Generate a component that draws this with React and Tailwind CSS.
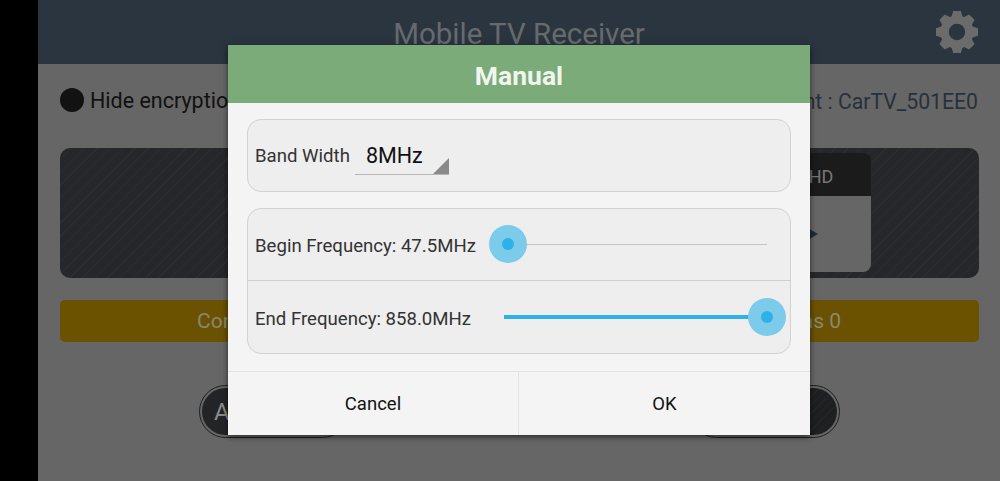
export default function App() {
  const teeth = [0, 45, 90, 135, 180, 225, 270, 315];
  return (
    <div className="relative flex h-[481px] w-[1000px] overflow-hidden bg-black font-['Roboto',sans-serif]">
      <div className="w-[38px] shrink-0 bg-black" />
      <div className="flex min-w-0 flex-1 flex-col bg-[#666666]">
        <header className="relative flex h-[64px] shrink-0 items-center justify-center bg-[#2a3540] pt-[3px]">
          <h1 className="text-[29.5px] leading-[34px] font-normal text-[#676a6d]">Mobile TV Receiver</h1>
          <svg className="absolute top-[10px] right-[21px] h-[44px] w-[44px]" viewBox="-22 -22 44 44" fill="#6b6b6b">
            <circle r="12.4" fill="none" stroke="#6b6b6b" strokeWidth="8.4" />
            {teeth.map((a) => (
              <polygon key={a} points="-6,-14 -3.8,-21 3.8,-21 6,-14" transform={`rotate(${a})`} />
            ))}
          </svg>
        </header>

        <div className="mt-[24px] flex h-[24px] items-center justify-between pr-[22px] pl-[22px]">
          <div className="flex items-center gap-[6px]">
            <span className="h-[24px] w-[24px] rounded-full bg-[#121212]" />
            <span className="pt-[3px] text-[21.5px] text-[#111111]">Hide encryption</span>
          </div>
          <span className="pt-[3px] text-[21.2px] text-[#27313b]">Current : CarTV_501EE0</span>
        </div>

        <div className="mt-[36px] mr-[21px] ml-[22px] flex h-[130px] justify-end rounded-[10px] bg-[repeating-linear-gradient(135deg,#26272a_0,#26272a_8px,#2c2d2f_8px,#2c2d2f_9px)] pt-[5px] pr-[108px]">
          <div className="flex h-[119px] w-[102px] flex-col overflow-hidden rounded-[8px]">
            <div className="flex h-[43px] items-center justify-center bg-[#1b1b1c] pt-[4px] pl-[2px] text-[18px] text-[#777777]">HD</div>
            <div className="flex flex-1 items-center justify-center bg-[#666666] pr-[16px]">
              <svg width="12" height="14" viewBox="0 0 12 14"><polygon points="0,0 12,7 0,14" fill="#1f2b36" /></svg>
            </div>
          </div>
        </div>

        <div className="mt-[22px] mr-[21px] ml-[22px] flex h-[42px] items-center justify-between rounded-[5px] bg-[#6a5200] pt-[2px] pr-[138px] pl-[137px] text-[21px] text-[#8a8674]">
          <span>Connecting</span>
          <span>Programs 0</span>
        </div>

        <div className="mt-[43px] flex justify-between pr-[160px] pl-[161px]">
          <div className="flex h-[53px] w-[150px] items-center rounded-full border border-[#1f1f1f] p-[2px]">
            <div className="flex h-full w-full items-center rounded-full bg-[#232426] pl-[12px] text-[24px] text-[#8a8a8a]">AUTO</div>
          </div>
          <div className="flex h-[53px] w-[150px] items-center rounded-full border border-[#1f1f1f] p-[2px]">
            <div className="h-full w-full rounded-full bg-[repeating-linear-gradient(135deg,#1e1f21_0,#1e1f21_5px,#242527_5px,#242527_6px)]" />
          </div>
        </div>
      </div>

      <div className="absolute top-[45px] left-[228px] flex h-[390px] w-[582px] flex-col bg-[#f4f4f4] shadow-[0_2px_6px_rgba(0,0,0,0.6)]">
        <div className="flex h-[58px] shrink-0 items-center justify-center bg-[#7bab78] pt-[4px] text-[26.5px] font-bold text-[#f2f5ef]">Manual</div>

        <div className="mx-[19px] mt-[16px] flex h-[73px] items-center rounded-[14px] border border-[#d2d2d2] bg-[#eeeeee] pl-[7px]">
          <span className="pt-[2px] text-[18.6px] text-[#333333]">Band Width</span>
          <div className="relative ml-[5px] flex h-[38px] w-[94px] items-center border-b border-[#b5b5b5] pt-[3px] pl-[11px] text-[21.5px] text-[#111111]">
            8MHz
            <svg className="absolute right-0 bottom-0" width="16" height="16" viewBox="0 0 16 16"><polygon points="16,0 16,16 0,16" fill="#8a8a8a" /></svg>
          </div>
        </div>

        <div className="mx-[19px] mt-[16px] flex h-[146px] flex-col rounded-[14px] border border-[#d2d2d2] bg-[#eeeeee]">
          <div className="flex h-[72px] items-center border-b border-[#cfcfcf] pl-[7px]">
            <span className="w-[253px] shrink-0 pt-[4px] text-[18.6px] text-[#333333]">Begin Frequency: 47.5MHz</span>
            <div className="relative h-px w-[259px] bg-[#c4c4c4]">
              <span className="absolute top-[-19px] left-[-19px] h-[38px] w-[38px] rounded-full bg-[#7ccbea]" />
              <span className="absolute top-[-6px] left-[-6px] h-[12px] w-[12px] rounded-full bg-[#2eb1e8]" />
            </div>
          </div>
          <div className="flex flex-1 items-center pl-[7px]">
            <span className="w-[249px] shrink-0 pt-[5px] text-[18.6px] text-[#333333]">End Frequency: 858.0MHz</span>
            <div className="relative h-[4px] w-[263px] bg-[#2eb1e8]">
              <span className="absolute top-[-17px] right-[-19px] h-[38px] w-[38px] rounded-full bg-[#7ccbea]" />
              <span className="absolute top-[-4px] right-[-6px] h-[12px] w-[12px] rounded-full bg-[#2eb1e8]" />
            </div>
          </div>
        </div>

        <div className="mt-[17px] flex flex-1 border-t border-[#e3e3e3] text-[18.5px] text-[#111111]">
          <button className="flex w-[291px] items-center justify-center border-r border-[#e3e3e3] pt-[2px]">Cancel</button>
          <button className="flex flex-1 items-center justify-center pt-[2px]">OK</button>
        </div>
      </div>
    </div>
  );
}
